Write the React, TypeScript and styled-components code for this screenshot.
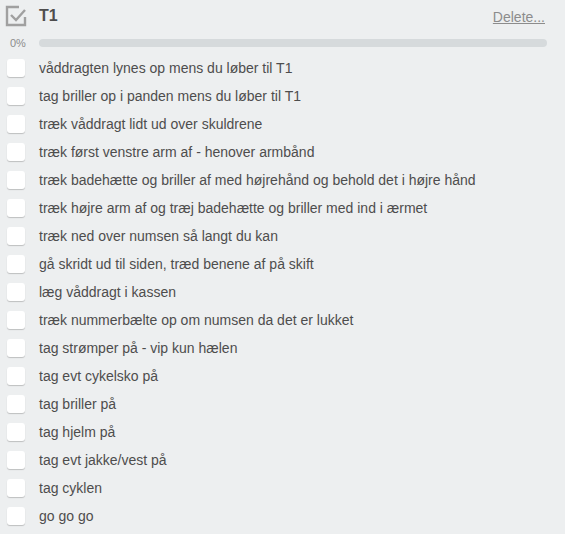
import React from 'react'
import styled, {createGlobalStyle} from 'styled-components'

const GlobalStyle = createGlobalStyle`
    body {
        margin: 0;
        background: #edeff0;
        font-family: "Liberation Sans", Arial, sans-serif;
        color: #4d4d4d;
    }
`

const items = [
    'våddragten lynes op mens du løber til T1',
    'tag briller op i panden mens du løber til T1',
    'træk våddragt lidt ud over skuldrene',
    'træk først venstre arm af - henover armbånd',
    'træk badehætte og briller af med højrehånd og behold det i højre hånd',
    'træk højre arm af og træj badehætte og briller med ind i ærmet',
    'træk ned over numsen så langt du kan',
    'gå skridt ud til siden, træd benene af på skift',
    'læg våddragt i kassen',
    'træk nummerbælte op om numsen da det er lukket',
    'tag strømper på - vip kun hælen',
    'tag evt cykelsko på',
    'tag briller på',
    'tag hjelm på',
    'tag evt jakke/vest på',
    'tag cyklen',
    'go go go',
]

const ChecklistIcon = () => (
    <svg width="22" height="22" viewBox="0 0 22 22" fill="none">
        <path d="M14 2H2v18h18v-8" stroke="#a0a0a0" strokeWidth="2.4" />
        <path d="M6 10l5 5 9-10" stroke="#a0a0a0" strokeWidth="2.4" />
    </svg>
)

const App: React.FC = () => {
    return (
        <>
            <GlobalStyle />
            <Checklist>
                <Header>
                    <IconCell>
                        <ChecklistIcon />
                    </IconCell>
                    <Title>T1</Title>
                    <DeleteLink href="#">Delete...</DeleteLink>
                </Header>
                <Progress>
                    <Percent>0%</Percent>
                    <Bar />
                </Progress>
                {items.map((text) => (
                    <Item key={text}>
                        <IconCell>
                            <Box />
                        </IconCell>
                        <ItemText>{text}</ItemText>
                    </Item>
                ))}
            </Checklist>
        </>
    )
}

const Checklist = styled.div`
    width: 565px;
    display: flex;
    flex-direction: column;
`

const Header = styled.div`
    height: 32px;
    display: flex;
    align-items: center;
    padding-right: 20px;
`

const IconCell = styled.div`
    width: 39px;
    display: flex;
    justify-content: flex-start;
    padding-left: 5px;
    box-sizing: border-box;
`

const Title = styled.h3`
    flex: 1;
    margin: 0;
    font-size: 16px;
    font-weight: bold;
    color: #4d4d4d;
`

const DeleteLink = styled.a`
    font-size: 14px;
    color: #8c8c8c;
    text-decoration: underline;
    margin-top: 2px;
`

const Progress = styled.div`
    height: 22px;
    display: flex;
    align-items: center;
    padding-right: 18px;
`

const Percent = styled.span`
    width: 39px;
    padding-left: 10px;
    box-sizing: border-box;
    font-size: 11px;
    color: #8c8c8c;
`

const Bar = styled.div`
    flex: 1;
    height: 8px;
    border-radius: 4px;
    background: #d6dadc;
`

const Item = styled.div`
    height: 28px;
    display: flex;
    align-items: center;
`

const Box = styled.div`
    width: 18px;
    height: 18px;
    margin-left: 2px;
    border-radius: 3px;
    background: #fff;
    box-shadow: 0 1px 1px rgba(0, 0, 0, 0.2);
`

const ItemText = styled.span`
    font-size: 14px;
    color: #4d4d4d;
`

export default App
